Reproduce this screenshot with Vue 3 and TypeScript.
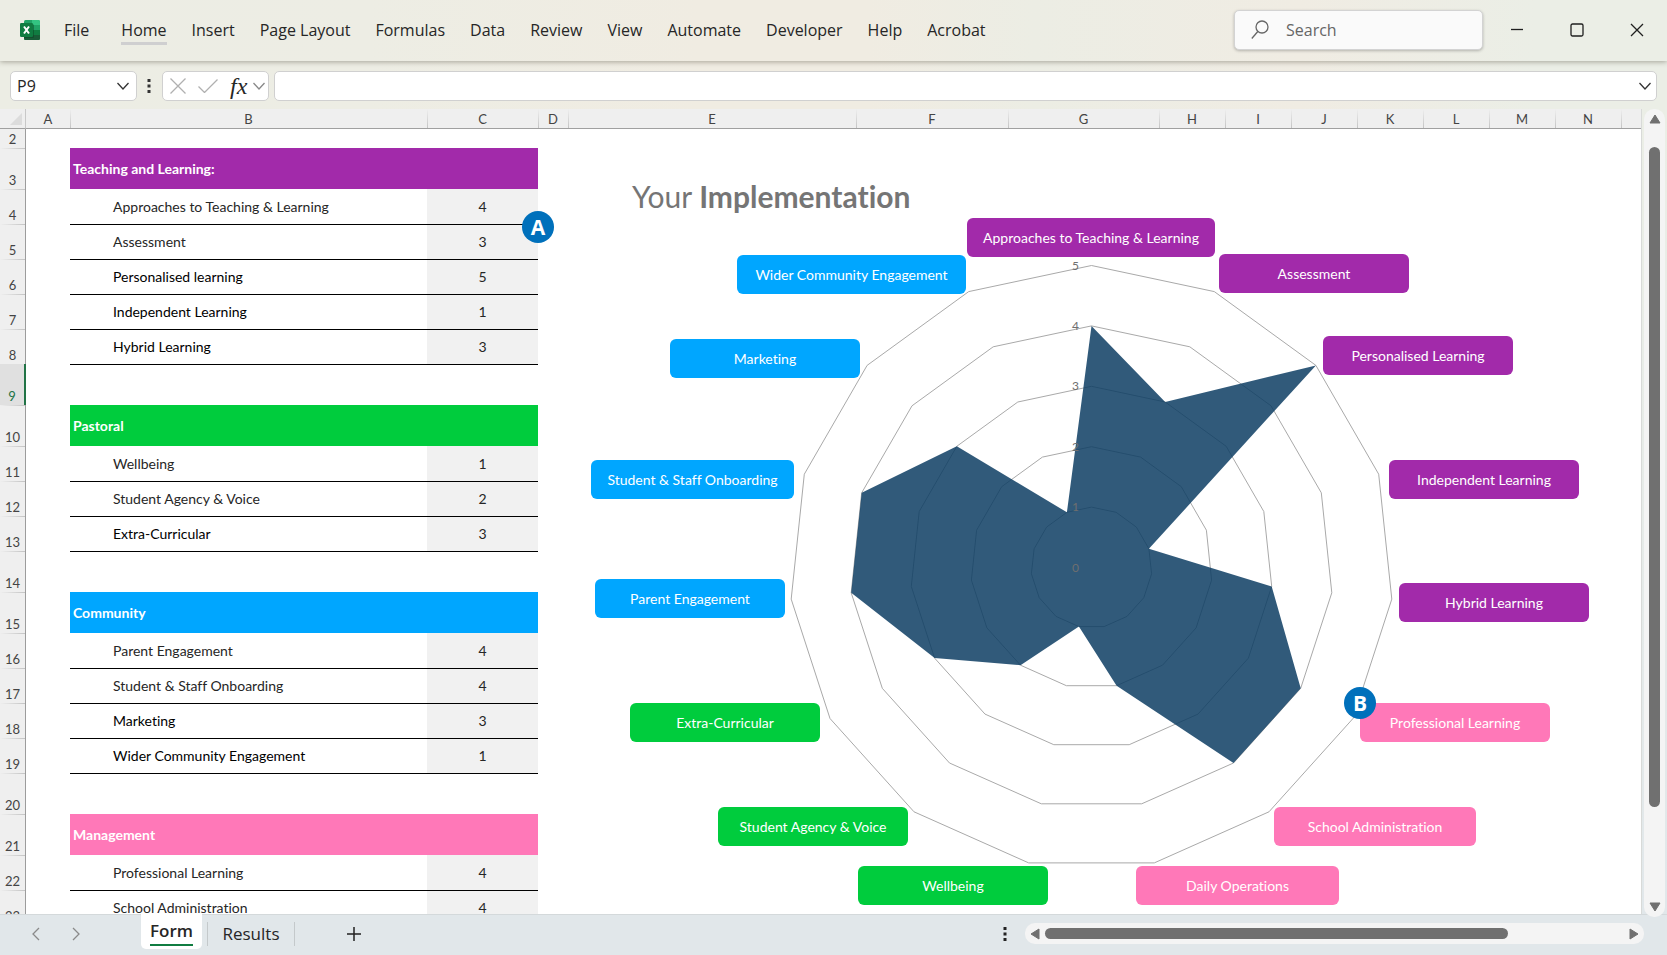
<script setup lang="ts">
import { ref } from 'vue'

type Tone = 'purple' | 'green' | 'blue' | 'pink'

interface SheetRow {
  num: number
  kind: 'blank' | 'short' | 'head' | 'item'
  text?: string
  value?: number
  tone?: Tone
  soft?: boolean
  ruled?: boolean
  active?: boolean
}

interface Pill {
  text: string
  tone: Tone
  x: number
  y: number
  w: number
}

const menus = ['Home', 'Insert', 'Page Layout', 'Formulas', 'Data', 'Review', 'View', 'Automate', 'Developer', 'Help', 'Acrobat']
const columns = ['A', 'B', 'C', 'D', 'E', 'F', 'G', 'H', 'I', 'J', 'K', 'L', 'M', 'N', '']

const groups: { title: string; tone: Tone; items: [string, number][] }[] = [
  {
    title: 'Teaching and Learning:',
    tone: 'purple',
    items: [
      ['Approaches to Teaching & Learning', 4],
      ['Assessment', 3],
      ['Personalised learning', 5],
      ['Independent Learning', 1],
      ['Hybrid Learning', 3],
    ],
  },
  {
    title: 'Pastoral',
    tone: 'green',
    items: [
      ['Wellbeing', 1],
      ['Student Agency & Voice', 2],
      ['Extra-Curricular', 3],
    ],
  },
  {
    title: 'Community',
    tone: 'blue',
    items: [
      ['Parent Engagement', 4],
      ['Student & Staff Onboarding', 4],
      ['Marketing', 3],
      ['Wider Community Engagement', 1],
    ],
  },
  {
    title: 'Management',
    tone: 'pink',
    items: [
      ['Professional Learning', 4],
      ['School Administration', 4],
    ],
  },
]

function buildRows(): SheetRow[] {
  const rows: SheetRow[] = [{ num: 2, kind: 'short' }]
  let num = 3
  groups.forEach((group, g) => {
    if (g > 0) {
      rows.push({ num, kind: 'blank', ruled: true, active: num === 9 })
      num++
    }
    rows.push({ num: num++, kind: 'head', text: group.title, tone: group.tone })
    group.items.forEach(([text, value], i) => {
      rows.push({ num: num++, kind: 'item', text, value, soft: i < 2, ruled: i > 0 })
    })
  })
  return rows
}

const rows = buildRows()
const nameBox = ref('P9')
const formula = ref('')
const search = ref('')

/* Chart canvas, measured from the top-left corner of cell E2 */
const pills: Pill[] = [
  { text: 'Approaches to Teaching & Learning', tone: 'purple', x: 399, y: 89, w: 248 },
  { text: 'Assessment', tone: 'purple', x: 651, y: 125, w: 190 },
  { text: 'Personalised Learning', tone: 'purple', x: 755, y: 207, w: 190 },
  { text: 'Independent Learning', tone: 'purple', x: 821, y: 331, w: 190 },
  { text: 'Hybrid Learning', tone: 'purple', x: 831, y: 454, w: 190 },
  { text: 'Professional Learning', tone: 'pink', x: 792, y: 574, w: 190 },
  { text: 'School Administration', tone: 'pink', x: 706, y: 678, w: 202 },
  { text: 'Daily Operations', tone: 'pink', x: 568, y: 737, w: 203 },
  { text: 'Wellbeing', tone: 'green', x: 290, y: 737, w: 190 },
  { text: 'Student Agency & Voice', tone: 'green', x: 150, y: 678, w: 190 },
  { text: 'Extra-Curricular', tone: 'green', x: 62, y: 574, w: 190 },
  { text: 'Parent Engagement', tone: 'blue', x: 27, y: 450, w: 190 },
  { text: 'Student & Staff Onboarding', tone: 'blue', x: 23, y: 331, w: 203 },
  { text: 'Marketing', tone: 'blue', x: 102, y: 210, w: 190 },
  { text: 'Wider Community Engagement', tone: 'blue', x: 169, y: 126, w: 229 },
]

const scores = [4, 3, 5, 1, 3, 4, 4, 2, 1, 2, 3, 4, 4, 3, 1]
const cx = 523.5
const cy = 438.5
const radius = 302
const step = radius / 5

function vertex(index: number, level: number): string {
  const angle = (index * 2 * Math.PI) / scores.length
  return `${(cx + level * step * Math.sin(angle)).toFixed(1)},${(cy - level * step * Math.cos(angle)).toFixed(1)}`
}

const rings = [1, 2, 3, 4, 5].map((level) => scores.map((_, i) => vertex(i, level)).join(' '))
const area = scores.map((score, i) => vertex(i, score)).join(' ')
const ticks = [0, 1, 2, 3, 4, 5].map((level) => ({ level, y: cy - level * step + 4 }))
</script>

<template>
  <div class="app">
    <header class="titlebar">
      <svg class="logo" viewBox="0 0 20 22" aria-hidden="true">
        <rect x="4" y="1" width="16" height="20" rx="1.5" fill="#21a366" />
        <path d="M12 1h6.5A1.500 1.500 0 0 1 20 2.500V6h-8z" fill="#33c481" />
        <path d="M4 6h8v5H4z" fill="#107c41" />
        <path d="M12 11h8v5h-8z" fill="#107c41" />
        <path d="M4 11h8v5h8v3.500a1.500 1.500 0 0 1-1.500 1.500h-13A1.500 1.500 0 0 1 4 19.500z" fill="#185c37" />
        <path d="M4 5h8.500A1.500 1.500 0 0 1 14 6.500v11a1.500 1.500 0 0 1-1.500 1.500H4z" fill="#0b3d22" opacity=".45" />
        <rect x="0" y="4" width="13" height="14" rx="1.300" fill="#107c41" />
        <path d="M4 7.500l5 7M9 7.500l-5 7" stroke="#fff" stroke-width="2" fill="none" />
      </svg>
      <nav class="menu" aria-label="Ribbon">
        <button type="button" class="menu-item file">File</button>
        <button v-for="m in menus" :key="m" type="button" class="menu-item" :class="{ current: m === 'Home' }">{{ m }}</button>
      </nav>
      <label class="search">
        <svg viewBox="0 0 18 20" aria-hidden="true"><circle cx="11" cy="7" r="6" /><path d="M6.800 11.500L.8 18.500" /></svg>
        <input v-model="search" type="text" placeholder="Search" aria-label="Search" />
      </label>
      <div class="window-controls">
        <button type="button" aria-label="Minimise"><svg viewBox="0 0 14 14"><path d="M1 6.500h12" /></svg></button>
        <button type="button" aria-label="Maximise"><svg viewBox="0 0 14 14"><rect x="1" y="1" width="12" height="12" rx="1.500" /></svg></button>
        <button type="button" aria-label="Close"><svg viewBox="0 0 14 14"><path d="M1 1l12 12M13 1L1 13" /></svg></button>
      </div>
    </header>

    <div class="formula-row">
      <div class="field name-box">
        <input v-model="nameBox" type="text" aria-label="Name box" />
        <button type="button" aria-label="Named ranges"><svg class="chev" viewBox="0 0 12 8"><path d="M.5 1L6 7l5.500-6" /></svg></button>
      </div>
      <svg class="dots" viewBox="0 0 4 14" aria-hidden="true"><path d="M.5 0h3v3h-3zM.5 5.500h3v3h-3zM.5 11h3v3h-3z" /></svg>
      <div class="field fx-box">
        <button type="button" aria-label="Cancel"><svg class="pale cross" viewBox="0 0 16 16"><path d="M.5 .5l15 15M15.500 .5l-15 15" /></svg></button>
        <button type="button" aria-label="Enter"><svg class="pale tick" viewBox="0 0 20 14"><path d="M.5 7.500l6 6L19.500 .5" /></svg></button>
        <button type="button" class="fx">fx</button>
        <button type="button" aria-label="Functions"><svg class="chev pale" viewBox="0 0 12 8"><path d="M.5 1L6 7l5.500-6" /></svg></button>
      </div>
      <div class="field formula">
        <input v-model="formula" type="text" aria-label="Formula bar" />
        <button type="button" aria-label="Expand formula bar"><svg class="chev" viewBox="0 0 12 8"><path d="M.5 1L6 7l5.500-6" /></svg></button>
      </div>
    </div>

    <div class="workspace">
      <main class="sheet">
        <table class="grid">
          <colgroup>
            <col class="w-head" /><col class="w-a" /><col class="w-b" /><col class="w-c" /><col class="w-d" />
            <col class="w-e" /><col class="w-f" /><col class="w-g" />
            <col v-for="n in 7" :key="n" class="w-std" /><col />
          </colgroup>
          <thead>
            <tr>
              <th class="corner"><svg viewBox="0 0 12 12" aria-hidden="true"><path d="M12 0v12H0z" /></svg></th>
              <th v-for="(c, i) in columns" :key="i" scope="col" :class="{ first: i === 0 }">{{ c }}</th>
            </tr>
          </thead>
          <tbody>
            <tr v-for="r in rows" :key="r.num" :class="[r.kind, { ruled: r.ruled, soft: r.soft }]">
              <th scope="row" :class="{ active: r.active }">{{ r.num }}</th>
              <td></td>
              <td v-if="r.kind === 'head'" colspan="2" class="band" :class="r.tone">{{ r.text }}</td>
              <template v-else>
                <td class="label">{{ r.text }}</td>
                <td class="value">{{ r.value }}</td>
              </template>
              <td colspan="12"></td>
            </tr>
          </tbody>
        </table>

        <section class="chart" aria-label="Your Implementation">
          <svg class="radar" width="1072" height="785" aria-hidden="true">
            <polygon v-for="(ring, i) in rings" :key="i" :points="ring" class="ring" />
            <polygon :points="area" class="area" />
            <text v-for="t in ticks" :key="t.level" x="511" :y="t.y" class="tick-label">{{ t.level }}</text>
          </svg>
          <h1>Your <b>Implementation</b></h1>
          <div
            v-for="p in pills"
            :key="p.text"
            class="pill"
            :class="p.tone"
            :style="{ left: p.x + 'px', top: p.y + 'px', width: p.w + 'px' }"
          >{{ p.text }}</div>
          <span class="badge badge-b">B</span>
        </section>
        <span class="badge badge-a">A</span>
      </main>

      <div class="vscroll">
        <button type="button" aria-label="Scroll up"><svg viewBox="0 0 12 10"><path d="M6 1l5 8H1z" /></svg></button>
        <div class="vtrack"><div class="vthumb"></div></div>
        <button type="button" aria-label="Scroll down"><svg viewBox="0 0 12 10"><path d="M6 9L1 1h10z" /></svg></button>
      </div>
    </div>

    <footer class="tabs">
      <button type="button" class="nav" aria-label="Previous sheet"><svg viewBox="0 0 8 14"><path d="M7 1L1 7l6 6" /></svg></button>
      <button type="button" class="nav" aria-label="Next sheet"><svg viewBox="0 0 8 14"><path d="M1 1l6 6-6 6" /></svg></button>
      <button type="button" class="tab selected"><span>Form</span></button>
      <button type="button" class="tab plain">Results</button>
      <button type="button" class="add" aria-label="New sheet"><svg viewBox="0 0 14 14"><path d="M7 0v14M0 7h14" /></svg></button>
      <svg class="dots end" viewBox="0 0 4 14" aria-hidden="true"><path d="M.5 0h3v3h-3zM.5 5.500h3v3h-3zM.5 11h3v3h-3z" /></svg>
      <div class="hscroll">
        <button type="button" aria-label="Scroll left"><svg viewBox="0 0 10 12"><path d="M1 6l8-5v10z" /></svg></button>
        <div class="htrack"><div class="hthumb"></div></div>
        <button type="button" aria-label="Scroll right"><svg viewBox="0 0 10 12"><path d="M9 6L1 1v10z" /></svg></button>
      </div>
    </footer>
  </div>
</template>

<style>
body {
  margin: 0;
}
</style>

<style scoped>
.app {
  display: grid;
  grid-template-rows: auto auto minmax(0, 1fr) auto;
  height: 100vh;
  overflow: hidden;
  background: linear-gradient(90deg, #ecede4 0%, #edede4 22%, #f0ece2 42%, #f0ece2 52%, #ecede4 62%, #f0ece3 78%, #ebeee6 92%);
  color: #262626;
  font-family: "Open Sans", "Noto Sans", sans-serif;
}

button {
  display: flex;
  align-items: center;
  justify-content: center;
  margin: 0;
  padding: 0;
  border: 0;
  background: none;
  color: inherit;
  font: inherit;
}

input {
  min-width: 0;
  flex: 1;
  padding: 0;
  border: 0;
  outline: 0;
  background: none;
  color: inherit;
  font: inherit;
}

svg {
  display: block;
  flex: none;
}

/* Title bar */
.titlebar {
  display: flex;
  align-items: center;
  box-sizing: border-box;
  height: 61px;
  padding: 0 23px 1px 20px;
  box-shadow: 0 1px 5px rgba(80, 75, 60, 0.45);
}

.logo {
  width: 20px;
  height: 22px;
}

.menu {
  display: flex;
  gap: 25px;
  margin-left: 24px;
}

.menu-item {
  height: 30px;
  border-top: 3px solid transparent;
  border-bottom: 3px solid transparent;
  font-size: 16px;
  white-space: nowrap;
}

.menu-item.file {
  margin-right: 7px;
}

.menu-item.current {
  border-bottom-color: #cfcfd0;
}

.search {
  display: flex;
  align-items: center;
  gap: 17px;
  box-sizing: border-box;
  width: 249px;
  height: 40px;
  margin-left: auto;
  padding: 0 16px;
  border: 1px solid #d3d3d3;
  border-radius: 5px;
  background: #fafafa;
  box-shadow: 0 1px 3px rgba(0, 0, 0, 0.25);
  color: #666;
  font-size: 16px;
}

.search svg {
  width: 18px;
  height: 20px;
  fill: none;
  stroke: #666;
  stroke-width: 1.3;
}

.search input::placeholder {
  color: #666;
  opacity: 1;
}

.window-controls {
  display: flex;
  gap: 46px;
  margin-left: 27px;
}

.window-controls svg {
  width: 14px;
  height: 14px;
  fill: none;
  stroke: #1f1f1f;
  stroke-width: 1.3;
}

/* Formula bar */
.formula-row {
  display: flex;
  align-items: center;
  height: 30px;
  padding: 10px 10px 8px;
}

.field {
  display: flex;
  align-items: center;
  box-sizing: border-box;
  height: 30px;
  border: 1px solid #d0d0d0;
  border-radius: 5px;
  background: #fff;
}

.name-box {
  width: 127px;
  padding: 0 7px 0 6px;
  font-size: 16px;
}

.chev {
  width: 12px;
  height: 8px;
  fill: none;
  stroke: #333;
  stroke-width: 1.3;
}

.chev.pale {
  stroke: #888;
}

.dots {
  width: 4px;
  height: 14px;
  margin: 0 11px 0 10px;
  fill: #333;
}

.fx-box {
  gap: 12px;
  width: 107px;
  padding: 0 2px 0 7px;
}

.fx-box .fx {
  margin-right: -6px;
  font-family: "Liberation Serif", serif;
  font-size: 24px;
  font-style: italic;
  line-height: 26px;
}

.pale {
  fill: none;
  stroke: #b0b0b0;
  stroke-width: 1.3;
}

.cross {
  width: 16px;
  height: 16px;
}

.tick {
  width: 20px;
  height: 14px;
}

.formula {
  flex: 1;
  margin-left: 5px;
  padding: 0 5px 0 8px;
  font-size: 16px;
}

/* Worksheet */
.workspace {
  display: flex;
  min-height: 0;
  background: linear-gradient(180deg, transparent, #e1e7ea);
}

.sheet {
  position: relative;
  flex: 1;
  min-width: 0;
  overflow: hidden;
  border-right: 1px solid #d8dad8;
  background: #fff;
  font-family: Lato, "Liberation Sans", sans-serif;
  font-variant-ligatures: none;
}

.grid {
  width: 100%;
  table-layout: fixed;
  border-collapse: separate;
  border-spacing: 0;
  font-size: 14px;
  line-height: 16px;
}

.w-head { width: 26px; }
.w-a { width: 44px; }
.w-b { width: 357px; }
.w-c { width: 111px; }
.w-d { width: 30px; }
.w-e { width: 288px; }
.w-f { width: 152px; }
.w-g { width: 151px; }
.w-std { width: 66px; }

.grid th,
.grid td {
  box-sizing: border-box;
  padding: 0;
}

.grid th {
  background: #efefef;
  color: #444;
  font-size: 13px;
  font-weight: 400;
}

thead th {
  height: 20px;
  border-bottom: 1px solid #a0a0a0;
  background: linear-gradient(180deg, #efefef, #c4c4c4) 0 0 / 1px 100% no-repeat #efefef !important;
}

thead th.first,
thead th.corner {
  background: #efefef !important;
}

.corner {
  border-right: 1px solid #c8c8c8;
}

.corner svg {
  width: 12px;
  height: 12px;
  margin: 1px 3px 0 auto;
  fill: #dcdcdc;
}

tbody th {
  padding-bottom: 1px !important;
  border-right: 1px solid #9c9c9c;
  background: linear-gradient(90deg, #efefef, #c4c4c4) 0 0 / 100% 1px no-repeat #efefef !important;
  vertical-align: bottom;
}

tbody th.active {
  border-right: 2px solid #217346;
  background: #e0e0e0 !important;
  color: #217346 !important;
}

.short { height: 19px; }
.head, .blank { height: 41px; }
.item { height: 35px; }

.short th {
  background: #efefef !important;
}

.label {
  padding-left: 43px !important;
  color: #000;
}

.value {
  text-align: center;
}

.item .value {
  background: #f1f1f1;
}

.soft .label {
  color: #262626;
}

.ruled .label,
.ruled .value {
  border-top: 1px solid #000;
}

.band {
  padding-left: 3px !important;
  color: #fff;
  font-weight: 700;
}

.purple { background: #a22aaa; }
.green { background: #00cc3d; }
.blue { background: #00a6ff; }
.pink { background: #ff78b8; }

/* Chart */
.chart {
  position: absolute;
  top: 20px;
  left: 568px;
}

.chart h1 {
  position: absolute;
  top: 47px;
  left: 64px;
  margin: 0;
  color: #757575;
  font-size: 30px;
  font-weight: 400;
  line-height: 40px;
  white-space: nowrap;
}

.ring {
  fill: none;
  stroke: #a9a9a9;
  stroke-width: 1;
}

.area {
  fill: rgb(13, 61, 99);
  fill-opacity: 0.85;
}

.tick-label {
  fill: #6f6f6f;
  font-size: 12px;
  text-anchor: end;
}

.pill {
  position: absolute;
  height: 39px;
  border-radius: 6px;
  color: #fff;
  font-size: 14px;
  line-height: 39px;
  text-align: center;
  white-space: nowrap;
}

.badge {
  position: absolute;
  width: 32px;
  height: 32px;
  border-radius: 50%;
  background: #0070bb;
  color: #fff;
  font-family: "Open Sans", sans-serif;
  font-size: 21px;
  font-weight: 700;
  line-height: 32px;
  text-align: center;
}

.badge-a {
  top: 102px;
  left: 522px;
}

.badge-b {
  top: 558px;
  left: 776px;
}

/* Scroll bars */
.vscroll {
  display: flex;
  flex-direction: column;
  align-items: center;
  z-index: 1;
  width: 21px;
  margin: 0 2px -3px 2px;
  border-radius: 10px;
  background: #f4f4f4;
}

.vscroll button {
  width: 21px;
  height: 20px;
}

.vscroll svg {
  width: 12px;
  height: 10px;
  fill: #707070;
  stroke: #707070;
  stroke-linejoin: round;
}

.vscroll button:first-child {
  margin-bottom: 18px;
}

.vtrack {
  flex: 1;
  width: 11px;
}

.vthumb {
  height: 88%;
  border-radius: 6px;
  background: #707070;
}

.tabs {
  display: flex;
  align-items: center;
  box-sizing: border-box;
  height: 41px;
  padding: 0 23px 2px 32px;
  background: #e1e7ea;
  box-shadow: inset 0 1px #d4d9db;
}

.tabs svg {
  fill: none;
  stroke: #222;
}

.nav {
  margin-right: 32px;
}

.nav svg {
  width: 8px;
  height: 14px;
  stroke: #8a8a8a;
  stroke-width: 1.3;
}

.tab {
  font-size: 17px;
}

.tab.selected {
  align-self: flex-start;
  align-items: flex-start;
  width: 61px;
  height: 35px;
  margin-left: 29px;
  border-radius: 0 0 5px 5px;
  background: #fff;
  font-weight: 600;
}

.tab.selected span {
  height: 30px;
  border-bottom: 2px solid #107c41;
  line-height: 34px;
}

.tab.plain {
  width: 88px;
  height: 24px;
  margin-left: 5px;
  border-right: 1px solid #c4c9cb;
  border-left: 1px solid #c4c9cb;
}

.add {
  margin-left: 52px;
}

.add svg {
  width: 14px;
  height: 14px;
  stroke-width: 1.5;
}

.tabs .dots.end {
  margin: 0 18px 0 auto;
  fill: #222;
  stroke: none;
}

.hscroll {
  display: flex;
  align-items: center;
  width: 38.4%;
  height: 21px;
  border-radius: 10px;
  background: #f4f4f4;
}

.hscroll button {
  width: 20px;
  height: 21px;
}

.hscroll svg {
  width: 10px;
  height: 12px;
  fill: #707070;
  stroke: #707070;
  stroke-linejoin: round;
}

.htrack {
  flex: 1;
}

.hthumb {
  width: 80%;
  height: 11px;
  border-radius: 6px;
  background: #707070;
}
</style>
